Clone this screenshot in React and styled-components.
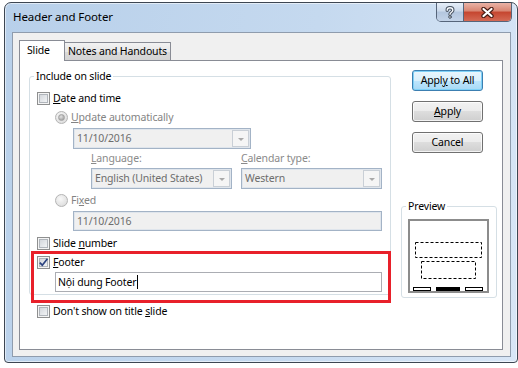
import React from 'react';
import styled, { createGlobalStyle, css } from 'styled-components';

const GlobalStyle = createGlobalStyle`
  html, body {
    margin: 0;
    padding: 0;
    background: #ffffff;
  }
  body {
    font-family: "Noto Sans", "Segoe UI", sans-serif;
    font-size: 10.5px;
    letter-spacing: -0.15px;
    color: #000;
  }
  * {
    box-sizing: border-box;
  }
`;

const Window = styled.div`
  width: 514px;
  height: 361px;
  margin: 2px 0 0 4px;
  border: 1px solid #3d4652;
  border-radius: 7px 7px 4px 4px;
  background: linear-gradient(100deg, #b8d0ea 0%, #c5d9ef 55%, #d8e6f6 100%);
  box-shadow: inset 0 0 0 1px rgba(255, 255, 255, 0.55);
  display: flex;
  flex-direction: column;
  padding: 0 6px 5px 7px;
`;

const TitleBar = styled.div`
  height: 29px;
  display: flex;
  align-items: flex-start;
`;

const Title = styled.div`
  margin-left: 1px;
  padding-top: 6px;
  line-height: 16px;
  font-size: 11.5px;
  letter-spacing: -0.1px;
`;

const Controls = styled.div`
  margin-left: auto;
  margin-right: -1px;
  height: 19px;
  display: flex;
  border: 1px solid #56657a;
  border-top: none;
  border-radius: 0 0 5px 5px;
  overflow: hidden;
`;

const CaptionButton = styled.div`
  display: flex;
  align-items: center;
  justify-content: center;
  width: ${({ $w }) => $w}px;
  ${({ $close }) =>
    $close
      ? css`
          background: linear-gradient(#eab3a6 0%, #d88572 45%, #c5452f 50%, #d46a55 100%);
        `
      : css`
          border-right: 1px solid #56657a;
          background: linear-gradient(#e6eef8 0%, #cbd9ea 45%, #b3c6de 50%, #c3d3e8 100%);
        `}
`;

const Client = styled.div`
  height: 325px;
  border: 1px solid #8f9cad;
  background: #f0f0f0;
  padding: 7px 7px 6px 6px;
  display: flex;
  flex-direction: column;
`;

const TabStrip = styled.div`
  height: 21px;
  margin-bottom: -1px;
  display: flex;
  align-items: flex-end;
  position: relative;
  z-index: 1;
`;

const Tab = styled.div`
  border: 1px solid #898c95;
  border-bottom: none;
  line-height: 16px;
  white-space: nowrap;
  ${({ $active }) =>
    $active
      ? css`
          position: relative;
          z-index: 2;
          width: 46px;
          height: 21px;
          padding: 1px 0 0 7px;
          background: #fff;
        `
      : css`
          width: 107px;
          height: 18px;
          margin: 0 0 1px -1px;
          padding: 0 0 0 3px;
          background: linear-gradient(#f2f2f2 0%, #e7e7e7 50%, #dadada 50%, #d4d4d4 100%);
        `}
`;

const Panel = styled.div`
  flex: 1;
  background: #fff;
  border: 1px solid #898c95;
  display: flex;
  justify-content: space-between;
  padding: 0 5px 0 9px;
`;

const LeftColumn = styled.div`
  width: 362px;
  margin-top: 8px;
`;

const RightColumn = styled.div`
  width: 96px;
  margin-top: 9px;
  display: flex;
  flex-direction: column;
`;

const GroupBox = styled.fieldset`
  margin: ${({ $mt }) => $mt || 0}px 0 0 0;
  padding: 0 0 ${({ $pb }) => $pb}px 0;
  border: 1px solid #d5dfe5;
  border-radius: 3px;
  min-width: 0;
`;

const Legend = styled.legend`
  margin-left: 4px;
  padding: 0 2px;
  line-height: 15px;
`;

const GroupBody = styled.div`
  padding-left: 7px;
`;

const OptionRow = styled.div`
  display: flex;
  align-items: center;
  gap: 3px;
  height: 17px;
  margin-top: ${({ $mt }) => $mt || 0}px;
  margin-left: ${({ $indent }) => $indent || 0}px;
`;

const Label = styled.span`
  line-height: 15px;
  white-space: nowrap;
  color: ${({ $disabled }) => ($disabled ? '#838383' : '#000')};
`;

const CheckBox = styled.span`
  flex: none;
  width: 13px;
  height: 13px;
  border: 1px solid #8e8f8f;
  background: linear-gradient(135deg, #cbcfd5 0%, #eef0f2 75%, #f7f7f7 100%);
  box-shadow: inset 0 0 0 1px #f4f4f4, inset 0 0 0 2px #b0b5bb;
  display: flex;
  align-items: center;
  justify-content: center;
`;

const Radio = styled.span`
  flex: none;
  width: 13px;
  height: 13px;
  border-radius: 50%;
  border: 1px solid #b4b4b4;
  background: radial-gradient(circle at 40% 35%, #f8f8f8 0%, #e4e4e4 60%, #d4d4d4 100%);
  display: flex;
  align-items: center;
  justify-content: center;
`;

const RadioDot = styled.span`
  width: 7px;
  height: 7px;
  border-radius: 50%;
  background: radial-gradient(circle at 40% 35%, #e2e2e2 0%, #a9a9a9 70%, #9a9a9a 100%);
  border: 1px solid #a2a2a2;
`;

const Field = styled.div`
  display: flex;
  align-items: center;
  width: ${({ $w }) => $w}px;
  height: ${({ $h }) => $h || 21}px;
  margin-top: ${({ $mt }) => $mt || 0}px;
  margin-left: ${({ $indent }) => $indent || 0}px;
  padding-left: 3px;
  white-space: nowrap;
  ${({ $enabled }) =>
    $enabled
      ? css`
          padding-left: 2px;
          border: 1px solid #abadb3;
          background: #fff;
          color: #000;
        `
      : css`
          border: 1px solid #a3b3c6;
          box-shadow: inset 0 0 0 1px #dfe5ec;
          background: #f0f0f0;
          color: #6d6d6d;
        `}
`;

const FieldText = styled.span`
  flex: 1;
  line-height: 15px;
`;

const Caret = styled.span`
  display: inline-block;
  width: 1px;
  height: 14px;
  margin-left: 1px;
  vertical-align: -3px;
  background: #000;
`;

const DropArrow = styled.span`
  flex: none;
  width: 17px;
  height: 17px;
  margin-right: 1px;
  border: 1px solid #c9cfd6;
  background: #f5f5f5;
  display: flex;
  align-items: center;
  justify-content: center;
  &::after {
    content: '';
    border-left: 3.5px solid transparent;
    border-right: 3.5px solid transparent;
    border-top: 3.5px solid #a9a9a9;
    margin-top: 1px;
  }
`;

const FieldGrid = styled.div`
  display: grid;
  grid-template-columns: 141px 141px;
  column-gap: 9px;
  margin-top: ${({ $mt }) => $mt || 0}px;
  margin-left: 54px;
`;

const SmallLabel = styled.span`
  height: 14px;
  line-height: 14px;
  color: #8a8a8a;
  white-space: nowrap;
`;

const FooterSection = styled.div`
  position: relative;
`;

const Highlight = styled.div`
  position: absolute;
  top: -3px;
  left: -6px;
  right: -1px;
  bottom: -11px;
  border: 3px solid #e8202a;
  pointer-events: none;
`;

const ButtonStack = styled.div`
  display: flex;
  flex-direction: column;
  gap: 10px;
  margin-left: 11px;
`;

const Button = styled.div`
  width: 71px;
  height: 21px;
  border-radius: 3px;
  display: flex;
  align-items: center;
  justify-content: center;
  line-height: 15px;
  white-space: nowrap;
  ${({ $default }) =>
    $default
      ? css`
          border: 1px solid #3c7fb1;
          background: linear-gradient(#eaf6fd 0%, #d9f0fc 50%, #bee6fd 50%, #a7d9f5 100%);
          box-shadow: inset 0 0 0 1px #7fd1f7;
        `
      : css`
          border: 1px solid #707070;
          background: linear-gradient(#f2f2f2 0%, #ebebeb 50%, #dddddd 50%, #cfcfcf 100%);
          box-shadow: inset 0 0 0 1px rgba(255, 255, 255, 0.75);
        `}
`;

const PreviewBody = styled.div`
  margin: 5px 0 0 6px;
  height: 74px;
`;

const Check = () => (
  <svg width="11" height="11" viewBox="0 0 11 11">
    <path d="M1.8 5.6 L4.3 8.2 L9.4 1.8" fill="none" stroke="#2c4380" strokeWidth="1.7" />
  </svg>
);

const HelpGlyph = () => (
  <svg width="12" height="13" viewBox="0 0 12 13">
    <g fill="none" strokeLinecap="round">
      <path d="M3.2 4.2 C3.2 1 8.8 1 8.8 4.2 C8.8 6.2 6 6.3 6 8.3" stroke="#45505e" strokeWidth="3.4" />
      <path d="M3.2 4.2 C3.2 1 8.8 1 8.8 4.2 C8.8 6.2 6 6.3 6 8.3" stroke="#f4f7fb" strokeWidth="1.4" />
      <circle cx="6" cy="11" r="1.3" fill="#f4f7fb" stroke="#45505e" strokeWidth="1" />
    </g>
  </svg>
);

const CloseGlyph = () => (
  <svg width="13" height="11" viewBox="0 0 13 11">
    <path d="M2.5 2 L10.5 9 M10.5 2 L2.5 9" stroke="#4a1e16" strokeWidth="4.4" strokeLinecap="round" />
    <path d="M2.5 2 L10.5 9 M10.5 2 L2.5 9" stroke="#ffffff" strokeWidth="2.2" strokeLinecap="round" />
  </svg>
);

const SlideThumb = () => (
  <svg width="81" height="74" viewBox="0 0 81 74">
    <rect x="1" y="1" width="79" height="72" fill="#fff" stroke="#8c8c8c" strokeWidth="2" />
    <g fill="none" stroke="#000" strokeWidth="1" strokeDasharray="3 2">
      <rect x="7.5" y="23.5" width="66" height="15" />
      <rect x="13.5" y="42.5" width="54" height="17" />
    </g>
    <rect x="5.5" y="68.5" width="17" height="3" fill="none" stroke="#000" />
    <rect x="28" y="68" width="24" height="4" fill="#000" />
    <rect x="57.5" y="68.5" width="17" height="3" fill="none" stroke="#000" />
  </svg>
);

export default function App() {
  return (
    <>
      <GlobalStyle />
      <Window>
        <TitleBar>
          <Title>Header and Footer</Title>
          <Controls>
            <CaptionButton $w={27}>
              <HelpGlyph />
            </CaptionButton>
            <CaptionButton $w={47} $close>
              <CloseGlyph />
            </CaptionButton>
          </Controls>
        </TitleBar>

        <Client>
          <TabStrip>
            <Tab $active>Slide</Tab>
            <Tab>Notes and Handouts</Tab>
          </TabStrip>

          <Panel>
            <LeftColumn>
              <GroupBox $pb={2}>
                <Legend>Include on slide</Legend>
                <GroupBody>
                  <OptionRow $mt={6}>
                    <CheckBox />
                    <Label><u>D</u>ate and time</Label>
                  </OptionRow>
                  <OptionRow $mt={2} $indent={18}>
                    <Radio><RadioDot /></Radio>
                    <Label $disabled><u>U</u>pdate automatically</Label>
                  </OptionRow>
                  <Field $w={178} $mt={2} $indent={36}>
                    <FieldText>11/10/2016</FieldText>
                    <DropArrow />
                  </Field>
                  <FieldGrid $mt={2}>
                    <SmallLabel><u>L</u>anguage:</SmallLabel>
                    <SmallLabel><u>C</u>alendar type:</SmallLabel>
                  </FieldGrid>
                  <FieldGrid $mt={3}>
                    <Field $w={141}>
                      <FieldText>English (United States)</FieldText>
                      <DropArrow />
                    </Field>
                    <Field $w={141}>
                      <FieldText>Western</FieldText>
                      <DropArrow />
                    </Field>
                  </FieldGrid>
                  <OptionRow $mt={3} $indent={18}>
                    <Radio />
                    <Label $disabled>Fi<u>x</u>ed</Label>
                  </OptionRow>
                  <Field $w={309} $h={20} $mt={2} $indent={36}>
                    <FieldText>11/10/2016</FieldText>
                  </Field>
                  <OptionRow $mt={4}>
                    <CheckBox />
                    <Label>Slide <u>n</u>umber</Label>
                  </OptionRow>
                  <FooterSection>
                    <OptionRow $mt={2}>
                      <CheckBox><Check /></CheckBox>
                      <Label><u>F</u>ooter</Label>
                    </OptionRow>
                    <Field $w={327} $h={20} $mt={1} $indent={18} $enabled>
                      <FieldText>Nội dung Footer<Caret /></FieldText>
                    </Field>
                    <Highlight />
                  </FooterSection>
                </GroupBody>
              </GroupBox>
              <OptionRow $mt={8} $indent={8}>
                <CheckBox />
                <Label>Don't show on title <u>s</u>lide</Label>
              </OptionRow>
            </LeftColumn>

            <RightColumn>
              <ButtonStack>
                <Button $default><span>Appl<u>y</u> to All</span></Button>
                <Button><span><u>A</u>pply</span></Button>
                <Button><span>Cancel</span></Button>
              </ButtonStack>
              <GroupBox $mt={46} $pb={4}>
                <Legend>Preview</Legend>
                <PreviewBody>
                  <SlideThumb />
                </PreviewBody>
              </GroupBox>
            </RightColumn>
          </Panel>
        </Client>
      </Window>
    </>
  );
}
